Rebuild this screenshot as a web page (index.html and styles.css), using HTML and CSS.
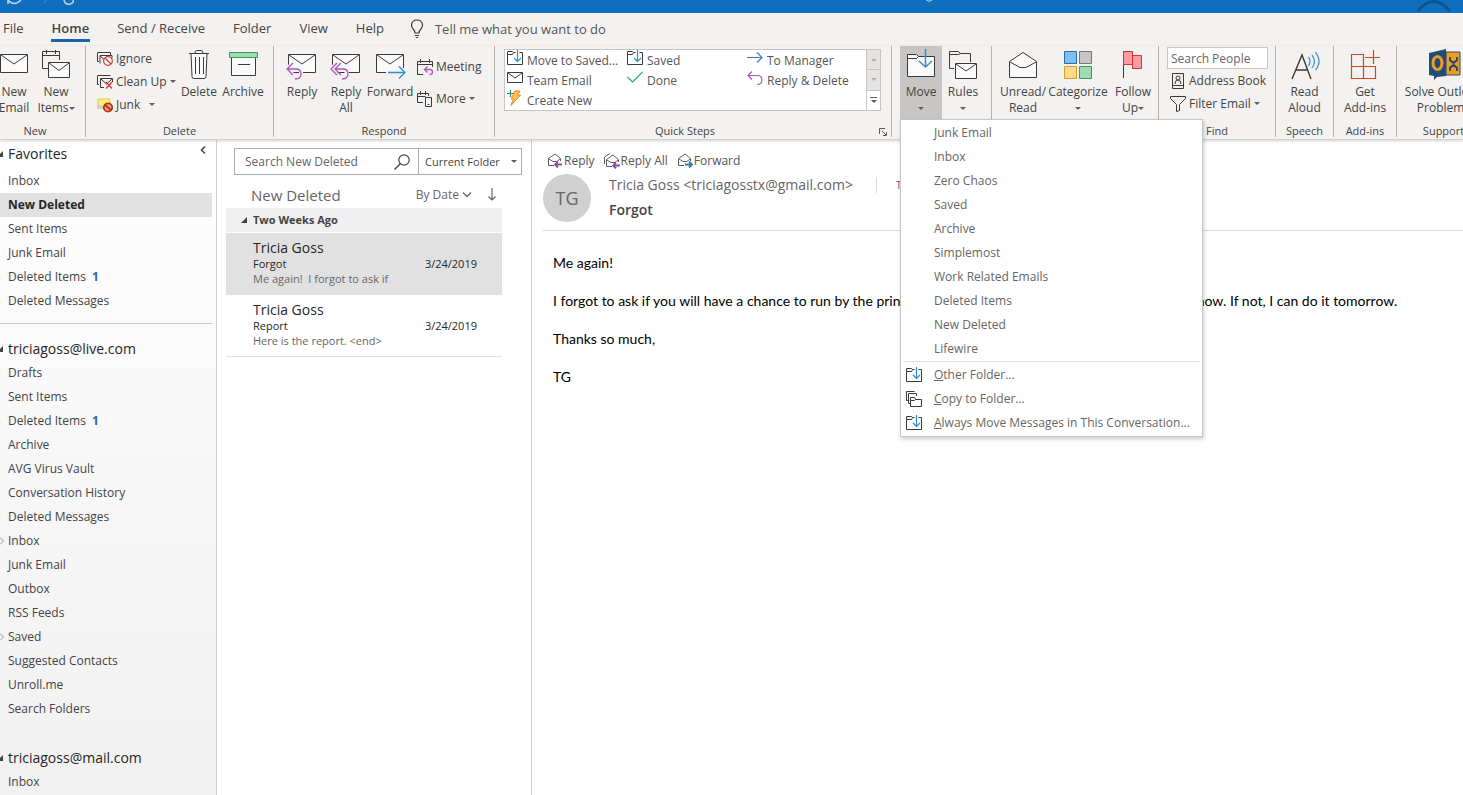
FILE: index.html
```
<!DOCTYPE html>
<html lang="en">
<head>
<meta charset="utf-8">
<title>New Deleted - Outlook</title>
<link rel="stylesheet" href="styles.css">
</head>
<body>
<svg class="sprite" aria-hidden="true">
  <symbol id="envelope" viewBox="0 0 32 32"><path d="M2.500 5.500h27v18h-27z" fill="#fafafa" stroke="#3b3a39"/><path d="M3 6l13 9 13-9" fill="none" stroke="#3b3a39"/></symbol>
  <symbol id="new-items" viewBox="0 0 32 32"><path d="M8 19.500H2.500v-17h17V11M2.500 6.500h17M6.500 1v4M15.500 1v4" fill="none" stroke="#3b3a39"/><path d="M8.500 13.500h21v15h-21z" fill="#fafafa" stroke="#3b3a39"/><path d="M9 14l10 7.500L29 14" fill="none" stroke="#3b3a39"/></symbol>
  <symbol id="trash" viewBox="0 0 32 32"><path d="M8 4.500l1 23q0 2 2 2h10q2 0 2-2l1-23z" fill="#fafafa" stroke="#3b3a39"/><path d="M6 4.500h20M12 4q0-2.500 2-2.500h4q2 0 2 2.500M12.500 8v17M16.500 8v17M20.500 8v17" fill="none" stroke="#3b3a39"/></symbol>
  <symbol id="archive" viewBox="0 0 32 32"><path d="M4.500 8.500h24v18h-24z" fill="#fafafa" stroke="#3b3a39"/><path d="M2.500 3.500h28v5h-28z" fill="#9fdbb0" stroke="#3c9a5a"/><path d="M11 15.500h12" stroke="#3b3a39"/></symbol>
  <symbol id="reply" viewBox="0 0 32 32"><path d="M2.500 5.500h27v18h-27z" fill="#fafafa" stroke="#3b3a39"/><path d="M3 6l13 9 13-9" fill="none" stroke="#3b3a39"/><path d="M2 20h9q5 1 4 6-1 4-6 4M7 14l-6 6 6 6" fill="none" stroke="#f3f2f1" stroke-width="4"/><path d="M1 20h9q5 0 5 5t-6 5M7 14l-6 6 6 6" fill="none" stroke="#ad55b8" stroke-width="1.300"/></symbol>
  <symbol id="reply-all" viewBox="0 0 32 32"><path d="M2.500 5.500h27v18h-27z" fill="#fafafa" stroke="#3b3a39"/><path d="M3 6l13 9 13-9" fill="none" stroke="#3b3a39"/><path d="M3 20h10q4 1 4 6M7 14l-6 6 6 6" fill="none" stroke="#f3f2f1" stroke-width="4"/><path d="M5 20h8q5 0 5 5t-6 5M7 14l-6 6 6 6M11 14l-6 6 6 6" fill="none" stroke="#ad55b8" stroke-width="1.300"/></symbol>
  <symbol id="forward" viewBox="0 0 32 32"><path d="M2.500 5.500h27v18h-27z" fill="#fafafa" stroke="#3b3a39"/><path d="M3 6l13 9 13-9" fill="none" stroke="#3b3a39"/><path d="M12 23.500h20M24 17l7 6-7 6" fill="none" stroke="#f3f2f1" stroke-width="4"/><path d="M14 23.500h17M25 17.500l6 6-6 6" fill="none" stroke="#2590cc" stroke-width="1.300"/></symbol>
  <symbol id="move-big" viewBox="0 0 32 32"><path d="M2.500 5.500h9l2 2h16v20h-27z" fill="#fafafa" stroke="#3b3a39"/><path d="M2.500 9.500h9l2-2" fill="none" stroke="#3b3a39"/><path d="M20.500 0v17M14 12l6.500 6 6.500-6" fill="none" stroke="#3f8fc6" stroke-width="1.600"/></symbol>
  <symbol id="rules" viewBox="0 0 32 32"><path d="M7 19.500H2.500v-17h9l2 2h10V13M2.500 5.500h9l2-1" fill="none" stroke="#3b3a39"/><path d="M8.500 14.500h21v15h-21z" fill="#fafafa" stroke="#3b3a39"/><path d="M9 15l10 7 10-7" fill="none" stroke="#3b3a39"/></symbol>
  <symbol id="unread" viewBox="0 0 32 32"><path d="M2.500 12.500L16 3.500l13.500 9v16h-27z" fill="#fafafa" stroke="#3b3a39"/><path d="M3 13l10 5.500h6L29 13" fill="none" stroke="#3b3a39"/></symbol>
  <symbol id="categorize" viewBox="0 0 32 32"><path d="M2.500 2.500h12v12h-12z" fill="#83beec" stroke="#1e6fb5"/><path d="M17.500 2.500h12v12h-12z" fill="#c8c6c4" stroke="#797775"/><path d="M2.500 17.500h12v12h-12z" fill="#ffd98a" stroke="#d99b2b"/><path d="M17.500 17.500h12v12h-12z" fill="#9fdbb0" stroke="#3c9a5a"/></symbol>
  <symbol id="flag" viewBox="0 0 32 32"><path d="M6.500 2v27" stroke="#3b3a39"/><path d="M6.500 2.500h9v4h9v13h-9v-4h-9zM15.500 6v10" fill="#ff9ba0" stroke="#d13438"/></symbol>
  <symbol id="read-aloud" viewBox="0 0 32 32"><path d="M3 30L13 6l9 24M6.500 21h12" fill="none" stroke="#3b3a39" stroke-width="1.400"/><path d="M19.500 8q3 4 0 9M23 6q5 7 0 13M26.500 3q7 10 0 18" fill="none" stroke="#4a96cc" stroke-width="1.300"/></symbol>
  <symbol id="add-ins" viewBox="0 0 32 32"><path d="M2.500 5.500h12v24h-12zM2.500 17.500h24v12h-24M16 8.500h15M24.500 1v14" fill="none" stroke="#d5451b" stroke-width="1.200"/></symbol>
  <symbol id="solve" viewBox="0 0 36 32"><path d="M3 4l17-4v27l-9 1-3 3v-4l-5-1z" fill="#1f4e79"/><path d="M20 3h14v23H20z" fill="#f39a22" stroke="#1f4e79"/><ellipse cx="11.500" cy="14" rx="4.500" ry="6.500" fill="none" stroke="#f39a22" stroke-width="3"/><path d="M24 8v3l2 2h3l2-2V8M27.500 12v6M24 22v-3l2-2h3l2 2v3" fill="none" stroke="#1f4e79" stroke-width="2"/></symbol>
  <symbol id="ignore" viewBox="0 0 16 16"><path d="M2 10.500H.500v-9h13V4M3 12.500v-8h12V7M3 5l5 4" fill="none" stroke="#3b3a39"/><circle cx="11" cy="10" r="4.300" fill="#fafafa" stroke="#d9373c" stroke-width="1.200"/><path d="M8 7l6 6" stroke="#d9373c" stroke-width="1.200"/></symbol>
  <symbol id="clean" viewBox="0 0 16 16"><path d="M2 10.500H.500v-9h13M7 13.500H3.500v-9h12V8M4 5l5.500 5L15 5" fill="none" stroke="#3b3a39"/><path d="M9 8l6 6.500M15 8l-6 6.500" stroke="#d9373c" stroke-width="1.400"/></symbol>
  <symbol id="junk" viewBox="0 0 16 16"><path d="M1 2h12v8H1z" fill="#fdf07a" stroke="#e0c84a"/><path d="M0 8h6v4H0z" fill="#d9d3b8"/><circle cx="11" cy="10.500" r="4.200" fill="#f4a26b" stroke="#b5321c" stroke-width="1.800"/><path d="M8 8l6 5" stroke="#b5321c" stroke-width="1.800"/></symbol>
  <symbol id="meeting" viewBox="0 0 16 16"><path d="M6 15.500H.500v-13h15V8M.500 5.500h15M3.500 0v4M12.500 0v4" fill="none" stroke="#3b3a39"/><path d="M8 10.500h5q2.500 0 2.500 2.500t-3 2.500M10.500 7.500l-3 3 3 3" fill="none" stroke="#ad55b8" stroke-width="1.300"/></symbol>
  <symbol id="more" viewBox="0 0 16 16"><path d="M6 11.500H.500v-9h11V5M.500 5.500h8M3.500 0v4M8.500 0v4" fill="none" stroke="#3b3a39"/><path d="M8.500 6.500h6v9h-6zM10.500 13.500h2" fill="#fafafa" stroke="#3b3a39"/></symbol>
  <symbol id="move" viewBox="0 0 16 16"><path d="M.500 1.500h5l1 1h9v12H.500zM.500 4.500h5l1-2" fill="#fff" stroke="#3b3a39"/><path d="M10.500 0v11" stroke="#fff" stroke-width="4"/><path d="M10.500 0v11M7 8l3.500 3.500L14 8" fill="none" stroke="#2590cc" stroke-width="1.200"/></symbol>
  <symbol id="mail" viewBox="0 0 16 16"><path d="M.500 2.500h15v10H.500zM1 3l7 5 7-5" fill="none" stroke="#3b3a39"/></symbol>
  <symbol id="bolt" viewBox="0 0 16 16"><path d="M8 1h5l-2.500 4h3L4 15.500 6.500 9H4z" fill="#ffc35b" stroke="#ea8a1a"/><path d="M0 3.500h7M3.500 0v7" stroke="#2c9b57" stroke-width="1.200"/></symbol>
  <symbol id="check" viewBox="0 0 16 16"><path d="M.500 7l5 5L15.500 2" fill="none" stroke="#3fb36b" stroke-width="1.300"/></symbol>
  <symbol id="arrow-right" viewBox="0 0 16 16"><path d="M0 7.500h15M10 2.500l5 5-5 5" fill="none" stroke="#2f86c4" stroke-width="1.200"/></symbol>
  <symbol id="arrow-back" viewBox="0 0 16 16"><path d="M1 5.500h9q5 0 5 4.500t-5 4.500M5 1.500l-4 4 4 4" fill="none" stroke="#ad55b8" stroke-width="1.200"/></symbol>
  <symbol id="copy" viewBox="0 0 16 16"><path d="M3 9.500H.500v-9h8M5 12.500H2.500v-10h8V5" fill="none" stroke="#3b3a39"/><path d="M4.500 6.500h4l1 2h6v7h-11zM4.500 9.500h4l1-1" fill="none" stroke="#3b3a39"/></symbol>
  <symbol id="book" viewBox="0 0 16 16"><path d="M2.500.500h11v15h-11zM2.500 12.500h11M5 11q0-4 3-4t3 4" fill="none" stroke="#3b3a39"/><circle cx="8" cy="5" r="2" fill="none" stroke="#3b3a39"/></symbol>
  <symbol id="filter" viewBox="0 0 16 16"><path d="M.500.500h15v2l-6 6v6l-3 1v-7l-6-6z" fill="none" stroke="#3b3a39"/></symbol>
  <symbol id="bulb" viewBox="0 0 16 20"><path d="M6 14q0-2-2-4-1.500-2-1.500-4Q3 1 8 1t5.500 5q0 2-1.500 4-2 2-2 4zM6 16.500h4M7 18.500h2" fill="none" stroke="#3b3a39" stroke-width="1.200"/></symbol>
  <symbol id="search" viewBox="0 0 16 16"><circle cx="10" cy="6" r="5.200" fill="none" stroke="#444" stroke-width="1.200"/><path d="M6.500 9.500L.500 15.500" stroke="#444" stroke-width="1.400"/></symbol>
  <symbol id="open-reply" viewBox="0 0 16 16"><path d="M7 12.500H1.500v-7L8 1l5.500 4.500V8M2 6l4 2.500h4L13 6" fill="none" stroke="#605e5c"/><path d="M8 11.500h7M11 8.500l-3 3 3 3" fill="none" stroke="#8a4fa8" stroke-width="1.800"/></symbol>
  <symbol id="open-reply-all" viewBox="0 0 16 16"><path d="M.500 11V4L6 .500M8 13.500H2.500v-7L9 2l5.500 4.500V9M3 7l4 2.500h4L14 7" fill="none" stroke="#605e5c"/><path d="M9 12.500h7M12 9.500l-3 3 3 3" fill="none" stroke="#8a4fa8" stroke-width="1.800"/></symbol>
  <symbol id="open-forward" viewBox="0 0 16 16"><path d="M7 12.500H1.500v-7L8 1l5.500 4.500V8M2 6l4 2.500h4L13 6" fill="none" stroke="#605e5c"/><path d="M8 11.500h7M12 8.500l3 3-3 3" fill="none" stroke="#2f7ea8" stroke-width="1.800"/></symbol>
</svg>

<div class="app">
  <div class="titlebar">
    <svg width="90" height="13" viewBox="0 0 90 13"><path d="M8 0q6 7 13 0M8 4V0M64 0q1 5 6 4 4-1 3-4" fill="none" stroke="#b9d7f0" stroke-width="1.500"/><path d="M43 3l4-3" stroke="#3f8fd0"/></svg>
    <svg class="titlebar-mark" width="12" height="13" viewBox="0 0 12 13"><path d="M3 0q3 2.500 6 0" fill="none" stroke="#b9d7f0"/></svg>
    <svg width="60" height="13" viewBox="0 0 60 13"><path d="M15 11Q30-8 47 11" fill="none" stroke="#0b5494" stroke-width="3"/></svg>
  </div>

  <nav class="tabs">
    <a href="#" class="tab">File</a>
    <a href="#" class="tab tab-active">Home</a>
    <a href="#" class="tab">Send / Receive</a>
    <a href="#" class="tab">Folder</a>
    <a href="#" class="tab">View</a>
    <a href="#" class="tab">Help</a>
    <label class="tell-me"><svg width="16" height="20"><use href="#bulb"/></svg><input type="text" placeholder="Tell me what you want to do"></label>
  </nav>

  <div class="ribbon">
    <section class="group group-new">
      <div class="tools">
        <button class="big"><svg class="icon-big"><use href="#envelope"/></svg><span>New<br>Email</span></button>
        <button class="big"><svg class="icon-big"><use href="#new-items"/></svg><span>New<br>Items<i class="caret"></i></span></button>
      </div>
      <h2 class="group-name">New</h2>
    </section>
    <section class="group group-delete">
      <div class="tools">
        <div class="stack">
          <button class="small"><svg class="icon"><use href="#ignore"/></svg>Ignore</button>
          <button class="small"><svg class="icon"><use href="#clean"/></svg>Clean Up<i class="caret"></i></button>
          <button class="small"><svg class="icon"><use href="#junk"/></svg>Junk<i class="caret caret-far"></i></button>
        </div>
        <button class="big"><svg class="icon-big"><use href="#trash"/></svg><span>Delete</span></button>
        <button class="big"><svg class="icon-big"><use href="#archive"/></svg><span>Archive</span></button>
      </div>
      <h2 class="group-name">Delete</h2>
    </section>
    <section class="group group-respond">
      <div class="tools">
        <button class="big"><svg class="icon-big"><use href="#reply"/></svg><span>Reply</span></button>
        <button class="big"><svg class="icon-big"><use href="#reply-all"/></svg><span>Reply<br>All</span></button>
        <button class="big"><svg class="icon-big"><use href="#forward"/></svg><span>Forward</span></button>
        <div class="stack stack-two">
          <button class="small"><svg class="icon"><use href="#meeting"/></svg>Meeting</button>
          <button class="small"><svg class="icon"><use href="#more"/></svg>More<i class="caret"></i></button>
        </div>
      </div>
      <h2 class="group-name">Respond</h2>
    </section>
    <section class="group group-quick">
      <div class="tools">
        <div class="gallery">
          <div class="steps">
            <button class="step"><svg class="icon"><use href="#move"/></svg>Move to Saved...</button>
            <button class="step"><svg class="icon"><use href="#move"/></svg>Saved</button>
            <button class="step"><svg class="icon"><use href="#arrow-right"/></svg>To Manager</button>
            <button class="step"><svg class="icon"><use href="#mail"/></svg>Team Email</button>
            <button class="step"><svg class="icon"><use href="#check"/></svg>Done</button>
            <button class="step"><svg class="icon"><use href="#arrow-back"/></svg>Reply &amp; Delete</button>
            <button class="step"><svg class="icon"><use href="#bolt"/></svg>Create New</button>
          </div>
          <div class="spinner">
            <button aria-label="Previous row" disabled><i class="caret caret-up"></i></button>
            <button aria-label="Next row" disabled><i class="caret"></i></button>
            <button class="all" aria-label="All quick steps"><i class="bar"></i><i class="caret"></i></button>
          </div>
        </div>
      </div>
      <h2 class="group-name">Quick Steps</h2>
      <button class="launcher" aria-label="Manage quick steps"><svg width="8" height="8" viewBox="0 0 8 8"><path d="M.500 6V.500H6M3 3l4 4M7.500 4v3.500H4" fill="none" stroke="#605e5c"/></svg></button>
    </section>
    <section class="group group-move">
      <div class="tools">
        <div class="menu-anchor">
          <button class="big big-open" aria-expanded="true"><svg class="icon-big"><use href="#move-big"/></svg><span>Move<br><i class="caret"></i></span></button>
          <div class="menu" role="menu">
            <button class="menu-item" role="menuitem">Junk Email</button>
            <button class="menu-item" role="menuitem">Inbox</button>
            <button class="menu-item" role="menuitem">Zero Chaos</button>
            <button class="menu-item" role="menuitem">Saved</button>
            <button class="menu-item" role="menuitem">Archive</button>
            <button class="menu-item" role="menuitem">Simplemost</button>
            <button class="menu-item" role="menuitem">Work Related Emails</button>
            <button class="menu-item" role="menuitem">Deleted Items</button>
            <button class="menu-item" role="menuitem">New Deleted</button>
            <button class="menu-item" role="menuitem">Lifewire</button>
            <hr class="menu-line">
            <button class="menu-item menu-icon" role="menuitem"><svg class="icon"><use href="#move"/></svg><span><u>O</u>ther Folder...</span></button>
            <button class="menu-item menu-icon" role="menuitem"><svg class="icon"><use href="#copy"/></svg><span><u>C</u>opy to Folder...</span></button>
            <button class="menu-item menu-icon" role="menuitem"><svg class="icon"><use href="#move"/></svg><span><u>A</u>lways Move Messages in This Conversation...</span></button>
          </div>
        </div>
        <button class="big"><svg class="icon-big"><use href="#rules"/></svg><span>Rules<br><i class="caret"></i></span></button>
      </div>
    </section>
    <section class="group group-tags">
      <div class="tools">
        <button class="big"><svg class="icon-big"><use href="#unread"/></svg><span>Unread/<br>Read</span></button>
        <button class="big big-wide"><svg class="icon-big"><use href="#categorize"/></svg><span>Categorize<br><i class="caret"></i></span></button>
        <button class="big"><svg class="icon-big"><use href="#flag"/></svg><span>Follow<br>Up<i class="caret"></i></span></button>
      </div>
    </section>
    <section class="group group-find">
      <div class="tools">
        <div class="stack stack-find">
          <input class="people" type="text" placeholder="Search People" aria-label="Search People">
          <button class="small"><svg class="icon"><use href="#book"/></svg>Address Book</button>
          <button class="small"><svg class="icon"><use href="#filter"/></svg>Filter Email<i class="caret"></i></button>
        </div>
      </div>
      <h2 class="group-name">Find</h2>
    </section>
    <section class="group group-speech">
      <div class="tools"><button class="big"><svg class="icon-big"><use href="#read-aloud"/></svg><span>Read<br>Aloud</span></button></div>
      <h2 class="group-name">Speech</h2>
    </section>
    <section class="group group-addins">
      <div class="tools"><button class="big"><svg class="icon-big"><use href="#add-ins"/></svg><span>Get<br>Add-ins</span></button></div>
      <h2 class="group-name">Add-ins</h2>
    </section>
    <section class="group group-support">
      <div class="tools"><button class="big"><svg class="icon-big icon-solve"><use href="#solve"/></svg><span>Solve Outlook<br>Problems</span></button></div>
      <h2 class="group-name">Support</h2>
    </section>
  </div>

  <main class="panes">
    <nav class="folders">
      <div class="account account-first"><i class="tri"></i>Favorites
        <button class="collapse" aria-label="Minimize folder pane"><svg width="6" height="8" viewBox="0 0 6 8"><path d="M5 .500L1.500 4 5 7.500" fill="none" stroke="#444" stroke-width="1.500"/></svg></button></div>
      <a class="folder" href="#">Inbox</a>
      <a class="folder folder-on" href="#">New Deleted</a>
      <a class="folder" href="#">Sent Items</a>
      <a class="folder" href="#">Junk Email</a>
      <a class="folder" href="#">Deleted Items <b class="count">1</b></a>
      <a class="folder" href="#">Deleted Messages</a>
      <hr class="folder-line">
      <div class="account"><i class="tri"></i>triciagoss@live.com</div>
      <a class="folder" href="#">Drafts</a>
      <a class="folder" href="#">Sent Items</a>
      <a class="folder" href="#">Deleted Items <b class="count">1</b></a>
      <a class="folder" href="#">Archive</a>
      <a class="folder" href="#">AVG Virus Vault</a>
      <a class="folder" href="#">Conversation History</a>
      <a class="folder" href="#">Deleted Messages</a>
      <a class="folder" href="#"><svg class="expand" viewBox="0 0 4 8"><path d="M0 .500L3.500 4 0 7.500" fill="none" stroke="#999"/></svg>Inbox</a>
      <a class="folder" href="#">Junk Email</a>
      <a class="folder" href="#">Outbox</a>
      <a class="folder" href="#">RSS Feeds</a>
      <a class="folder" href="#"><svg class="expand" viewBox="0 0 4 8"><path d="M0 .500L3.500 4 0 7.500" fill="none" stroke="#999"/></svg>Saved</a>
      <a class="folder" href="#">Suggested Contacts</a>
      <a class="folder" href="#">Unroll.me</a>
      <a class="folder" href="#">Search Folders</a>
      <div class="account account-next"><i class="tri"></i>triciagoss@mail.com</div>
      <a class="folder" href="#">Inbox</a>
    </nav>

    <section class="list">
      <div class="searchbar">
        <input type="text" placeholder="Search New Deleted" aria-label="Search New Deleted">
        <button class="search-go" aria-label="Search"><svg class="icon"><use href="#search"/></svg></button>
        <div class="scope"><select aria-label="Search scope"><option>Current Folder</option></select><i class="caret"></i></div>
      </div>
      <div class="list-head">
        <h1>New Deleted</h1>
        <button class="sort">By Date<svg width="10" height="6" viewBox="0 0 10 6"><path d="M1 .500l4 4 4-4" fill="none" stroke="#666" stroke-width="1.400"/></svg></button>
        <button class="order" aria-label="Newest on top"><svg width="8" height="13" viewBox="0 0 8 13"><path d="M4 0v12M.500 8.500L4 12l3.500-3.500" fill="none" stroke="#666" stroke-width="1.200"/></svg></button>
      </div>
      <div class="period"><i class="tri"></i>Two Weeks Ago</div>
      <article class="mail mail-on">
        <h3>Tricia Goss</h3>
        <div class="mail-row"><span>Forgot</span><time>3/24/2019</time></div>
        <p>Me again!&nbsp; I forgot to ask if</p>
      </article>
      <article class="mail">
        <h3>Tricia Goss</h3>
        <div class="mail-row"><span>Report</span><time>3/24/2019</time></div>
        <p>Here is the report. &lt;end&gt;</p>
      </article>
    </section>

    <section class="reading">
      <div class="actions">
        <button><svg class="icon"><use href="#open-reply"/></svg>Reply</button>
        <button><svg class="icon"><use href="#open-reply-all"/></svg>Reply All</button>
        <button><svg class="icon"><use href="#open-forward"/></svg>Forward</button>
      </div>
      <header class="message-head">
        <div class="avatar">TG</div>
        <div class="who">
          <div class="from"><span class="sender">Tricia Goss &lt;triciagosstx@gmail.com&gt;</span><span class="to">To</span></div>
          <h2>Forgot</h2>
        </div>
      </header>
      <div class="message">
        <p>Me again!</p>
        <p class="long">I forgot to ask if you will have a chance to run by the printer and get the flyers for a meeting. Just let me know. If not, I can do it tomorrow.</p>
        <p>Thanks so much,</p>
        <p>TG</p>
      </div>
    </section>
  </main>
</div>
</body>
</html>
```

FILE: styles.css
```
* { box-sizing: border-box; }
html, body { height: 100%; }
body { margin: 0; overflow: hidden; background: #fff; color: #444; font: 12px/16px "Open Sans", "Noto Sans", sans-serif; }
button, input, select { font: inherit; color: inherit; border: 0; padding: 0; margin: 0; background: none; border-radius: 0; }
input, select { min-width: 0; outline: 0; }
input::placeholder { color: #666; opacity: 1; }
h1, h2, h3, p { margin: 0; font-weight: 400; }
hr { border: 0; margin: 0; }
a { color: inherit; text-decoration: none; }
svg { flex: none; }
.sprite { position: absolute; width: 0; height: 0; }
.icon { width: 16px; height: 16px; }
.icon-big { width: 32px; height: 32px; }
.app { display: flex; flex-direction: column; height: 100%; }

.caret { display: inline-block; border: 3px solid transparent; border-top-color: #605e5c; border-bottom-width: 0; margin-left: 4px; vertical-align: middle; }
.tri { border: 3px solid transparent; border-right-color: #444; border-bottom-color: #444; }

.titlebar { display: flex; justify-content: space-between; height: 13px; flex: none; background: #106ebe; }
.titlebar-mark { margin-left: auto; margin-right: 468px; }

.tabs { display: flex; align-items: flex-start; gap: 25px; height: 33px; flex: none; padding-left: 3px; background: #f3f2f1; font-size: 13px; }
.tab { height: 29px; line-height: 31px; padding: 0 1px; margin: 0 -1px; white-space: nowrap; border-bottom: 3px solid transparent; }
.tab + .tab { margin-left: 2px; }
.tab-active { font-weight: 600; border-color: #1a66ad; }
.tell-me { display: flex; align-items: center; gap: 10px; height: 31px; }
.tell-me input { width: 220px; }
.tell-me input::placeholder { color: #555; }

.ribbon { display: flex; height: 94px; flex: none; background: #f3f2f1; border-bottom: 1px solid #d2d0ce; box-shadow: 0 1px 3px rgba(0, 0, 0, .18); position: relative; z-index: 2; }
.group { display: flex; flex-direction: column; justify-content: space-between; flex: none; height: 91px; border-right: 1px solid #b3b0ad; position: relative; }
.group-name { text-align: center; font-size: 11px; line-height: 12px; }
.tools { display: flex; }
.big { display: flex; flex-direction: column; align-items: center; width: 42px; height: 73px; padding-top: 3px; line-height: 16px; white-space: nowrap; flex: none; }
.big span { margin-top: 3px; }
.big .caret { margin-left: 3px; }
.big br + .caret { margin-left: 0; }
.big-open { background: #c8c6c4; }
.stack { display: flex; flex-direction: column; padding-top: 1px; }
.small { display: flex; align-items: center; gap: 3px; height: 23px; white-space: nowrap; }
.small .caret { margin-left: 0; }
.small .caret-far { margin-left: 6px; }

.group-new { width: 101px; margin-left: -15px; }
.group-new .tools { padding-left: 8px; }
.group-delete { width: 188px; }
.group-delete .tools { padding-left: 11px; }
.group-delete .stack { width: 80px; }
.group-delete .big { width: 44px; }
.group-respond { width: 221px; }
.group-respond .tools { padding-left: 6px; }
.group-respond .big { width: 44px; }
.group-respond .stack { padding-top: 9px; gap: 9px; margin-left: 5px; }
.group-quick { width: 397px; }
.group-quick .tools { padding: 3px 9px 0; }
.group-quick .group-name { padding-right: 16px; }
.group-move { width: 100px; }
.group-move .tools { padding-left: 8px; }
.group-tags { width: 167px; }
.group-tags .tools { padding-left: 10px; }
.group-tags .big-wide { width: 68px; }
.group-find { width: 117px; }
.group-find .tools { padding-left: 8px; }
.group-find .small { padding-left: 3px; }
.group-speech { width: 58px; }
.group-addins { width: 63px; }
.group-support { width: 94px; }
.group-speech .tools, .group-addins .tools, .group-support .tools { justify-content: center; }
.icon-solve { width: 36px; }
.people { width: 101px; height: 22px; padding: 0 3px; background: #fff; border: 1px solid #c8c6c4; }

.gallery { display: flex; width: 377px; height: 62px; background: #fff; border: 1px solid #c8c6c4; }
.steps { display: grid; grid-template-columns: repeat(3, 120px); grid-auto-rows: 20px; flex: 1; padding-left: 2px; overflow: hidden; }
.step { display: flex; gap: 4px; text-align: left; white-space: nowrap; line-height: 22px; color: #555; }
.spinner { display: flex; flex-direction: column; width: 14px; border-left: 1px solid #c8c6c4; }
.spinner button { flex: 1; display: flex; flex-direction: column; gap: 2px; align-items: center; justify-content: center; }
.spinner button:disabled { background: #e6e4e2; border-bottom: 1px solid #c8c6c4; }
.spinner .caret { margin: 0; }
.spinner :disabled .caret { border-top-color: #b3b0ad; }
.spinner .caret-up { transform: rotate(180deg); }
.bar { width: 7px; height: 1px; background: #605e5c; }
.launcher { position: absolute; right: 4px; bottom: 1px; display: flex; }

.menu-anchor { position: relative; }
.menu { position: absolute; left: 0; top: 73px; z-index: 5; width: 303px; padding: 1px 0; background: #fff; border: 1px solid #c6c6c6; box-shadow: 1px 2px 4px rgba(0, 0, 0, .2); }
.menu-item { display: flex; align-items: center; width: 100%; height: 24px; padding-left: 33px; color: #666; white-space: nowrap; }
.menu-icon { padding-left: 5px; gap: 12px; }
.menu-line { height: 1px; margin: 0 2px 1px; background: #e1e1e1; }

.panes { display: flex; flex: 1; min-height: 0; }
.folders { width: 217px; flex: none; overflow: hidden; border-right: 1px solid #d0d0d0; background: linear-gradient(#fff, #fafafa 30%, #f1f1f1); padding-top: 2px; }
.account { display: flex; align-items: center; gap: 5px; height: 24px; font-size: 14px; color: #262626; }
.account .tri { margin-left: -3px; }
.account-first { margin-bottom: 3px; }
.account-next { margin-top: 25px; }
.collapse { display: flex; margin: 0 10px 8px auto; }
.folder { display: flex; align-items: center; height: 24px; padding-left: 8px; margin-right: 4px; white-space: nowrap; }
.folder-on { background: #e1e1e1; color: #262626; font-weight: 700; }
.expand { width: 4px; height: 8px; margin: 0 4px 0 -8px; }
.count { margin-left: 6px; color: #1f6bab; }
.folder-line { height: 1px; margin: 10px 4px 13px 0; background: #c8c8c8; }

.list { width: 315px; flex: none; padding: 8px 9px 0; border-right: 1px solid #d0d0d0; }
.searchbar { display: flex; height: 27px; margin-left: 8px; border: 1px solid #ababab; }
.searchbar input { flex: 1; padding: 0 10px; }
.search-go { display: flex; align-items: center; margin-right: 8px; }
.scope { display: flex; align-items: center; width: 103px; padding-right: 4px; border-left: 1px solid #ababab; font-size: 11px; }
.scope select { flex: 1; appearance: none; padding-left: 6px; }
.list-head { display: flex; align-items: center; height: 33px; padding: 6px 26px 0 25px; color: #666; }
.list-head h1 { flex: 1; font-size: 15px; }
.sort { display: flex; align-items: center; gap: 3px; font-size: 12px; }
.order { display: flex; margin-left: 16px; }
.period { display: flex; align-items: center; gap: 6px; height: 24px; margin: 0 20px 1px 0; padding-left: 15px; background: #f0f0f0; font-size: 11px; font-weight: 700; }
.mail { height: 62px; margin-right: 20px; padding: 6px 25px 0 27px; border-bottom: 1px solid #e1e1e1; }
.mail-on { background: #e1e1e1; }
.mail h3 { font-size: 14px; line-height: 17px; color: #262626; }
.mail-row { display: flex; justify-content: space-between; font-size: 11px; line-height: 15px; color: #262626; }
.mail p { font-size: 11px; line-height: 15px; color: #666; }

.reading { flex: 1; min-width: 0; padding: 12px 0 0 11px; overflow: hidden; }
.actions { display: flex; gap: 9px; padding-left: 4px; color: #555; }
.actions button { display: flex; align-items: center; gap: 1px; height: 18px; }
.message-head { display: flex; gap: 18px; height: 61px; padding-top: 4px; border-bottom: 1px solid #d8d8d8; }
.avatar { width: 48px; height: 48px; border-radius: 50%; background: #d0d0d0; color: #666; font-size: 18px; line-height: 48px; text-align: center; flex: none; }
.from { display: flex; align-items: center; height: 22px; color: #666; white-space: nowrap; }
.sender { font-size: 14px; padding-right: 23px; border-right: 1px solid #d8d8d8; }
.to { margin-left: 19px; font-size: 10px; }
.who h2 { font-size: 14px; font-weight: 600; line-height: 20px; margin-top: 4px; }
.message { display: grid; gap: 19px; padding: 22px 0 0 10px; color: #000; font: 14px/19px Lato, "Open Sans", sans-serif; }
.long { white-space: nowrap; }
```
